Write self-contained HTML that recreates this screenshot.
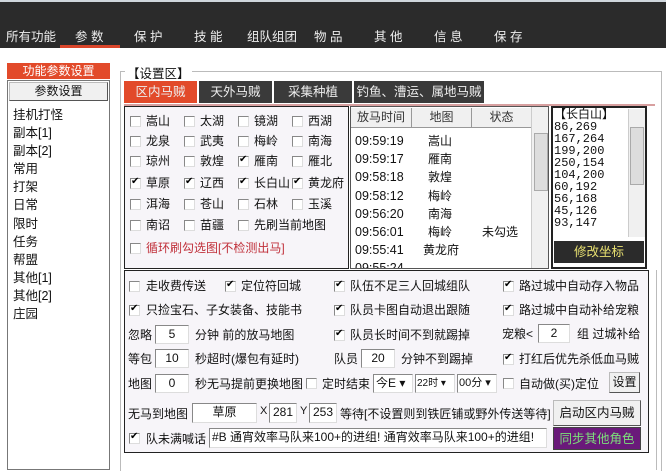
<!DOCTYPE html><html><head><meta charset="utf-8"><style>
body{margin:0;width:666px;height:470px;overflow:hidden;background:#fff;font-family:"Liberation Sans","Noto Sans CJK SC",sans-serif;font-size:12px;color:#111;position:relative}
.a{position:absolute;white-space:nowrap}
.top{left:0;top:0;width:666px;height:48px;background:#2b2b2b;border-top:2px solid #cfd6dc;box-sizing:border-box}
.m{color:#eee;top:26px;font-size:12.5px}
.cb{position:absolute;width:11px;height:11px;border:1px solid #888;border-right-color:#ddd;border-bottom-color:#ddd;background:#fff;box-sizing:border-box}
.cb.c::after{content:"✔";position:absolute;left:0;top:-3px;font-size:10px;color:#000}
.p{border:1px solid #222;background:#f7f5f9;box-sizing:border-box}
.in{position:absolute;background:#fff;border:1px solid #888;border-right-color:#ddd;border-bottom-color:#ddd;box-sizing:border-box;text-align:center;font-size:12px;line-height:17px;height:19px}
.btn{position:absolute;background:#f0f0f0;border:1px solid #bbb;border-right-color:#555;border-bottom-color:#555;box-sizing:border-box;text-align:center}
.tab{position:absolute;top:81px;height:22px;background:#3a3a3a;color:#eee;line-height:22px;text-align:center;font-size:12.5px}
.sb{position:absolute;background:#f0f0f0;border-left:1px solid #ccc}
.th{position:absolute;top:108px;height:20px;background:#f0f0f0;border-right:1px solid #999;border-bottom:1px solid #999;box-sizing:border-box;text-align:center;line-height:19px;color:#333}
</style></head><body>
<div class="a top"></div>
<div class="a m" style="left:6px">所有功能</div>
<div class="a m" style="left:75px">参 数</div>
<div class="a" style="left:60px;top:45px;width:60px;height:3px;background:#d9452a"></div>
<div class="a m" style="left:134px">保 护</div>
<div class="a m" style="left:194px">技 能</div>
<div class="a m" style="left:247px">组队组团</div>
<div class="a m" style="left:314px">物 品</div>
<div class="a m" style="left:374px">其 他</div>
<div class="a m" style="left:434px">信 息</div>
<div class="a m" style="left:494px">保 存</div>

<div class="a" style="left:7px;top:63px;width:103px;height:16px;background:#e24a2a;color:#fff;text-align:center;line-height:16px;font-size:12px">功能参数设置</div>
<div class="a" style="left:7px;top:80px;width:103px;height:390px;border:1px solid #777;box-sizing:border-box;background:#fff"></div>
<div class="btn" style="left:9px;top:82px;width:99px;height:19px;line-height:17px">参数设置</div>
<div class="a" style="left:13px;top:106px;line-height:18.1px;font-size:12.5px">挂机打怪<br>副本[1]<br>副本[2]<br>常用<br>打架<br>日常<br>限时<br>任务<br>帮盟<br>其他[1]<br>其他[2]<br>庄园</div>

<div class="a" style="left:120px;top:71px;width:540px;height:399px;border:1px solid #bbb;border-bottom:none"></div>
<div class="a" style="left:125px;top:63px;background:#fff;padding:0 2px;font-size:12.5px">【设置区】</div>
<div class="tab" style="left:124px;width:73px;background:#e24a2a">区内马贼</div>
<div class="tab" style="left:199px;width:73px">天外马贼</div>
<div class="tab" style="left:274px;width:78px">采集种植</div>
<div class="tab" style="left:354px;width:130px">钓鱼、漕运、属地马贼</div>

<div class="a p" style="left:124px;top:106px;width:225px;height:163px"></div>
<div class="a" style="left:124px;top:104px;width:531px;height:2px;background:#d8a0a0"></div>
<div class="cb" style="left:130px;top:116px"></div><div class="a" style="left:146px;top:112px">嵩山</div>
<div class="cb" style="left:184px;top:116px"></div><div class="a" style="left:200px;top:112px">太湖</div>
<div class="cb" style="left:238px;top:116px"></div><div class="a" style="left:254px;top:112px">镜湖</div>
<div class="cb" style="left:292px;top:116px"></div><div class="a" style="left:308px;top:112px">西湖</div>
<div class="cb" style="left:130px;top:136px"></div><div class="a" style="left:146px;top:132px">龙泉</div>
<div class="cb" style="left:184px;top:136px"></div><div class="a" style="left:200px;top:132px">武夷</div>
<div class="cb" style="left:238px;top:136px"></div><div class="a" style="left:254px;top:132px">梅岭</div>
<div class="cb" style="left:292px;top:136px"></div><div class="a" style="left:308px;top:132px">南海</div>
<div class="cb" style="left:130px;top:156px"></div><div class="a" style="left:146px;top:152px">琼州</div>
<div class="cb" style="left:184px;top:156px"></div><div class="a" style="left:200px;top:152px">敦煌</div>
<div class="cb c" style="left:238px;top:156px"></div><div class="a" style="left:254px;top:152px">雁南</div>
<div class="cb" style="left:292px;top:156px"></div><div class="a" style="left:308px;top:152px">雁北</div>
<div class="cb c" style="left:130px;top:178px"></div><div class="a" style="left:146px;top:174px">草原</div>
<div class="cb c" style="left:184px;top:178px"></div><div class="a" style="left:200px;top:174px">辽西</div>
<div class="cb c" style="left:238px;top:178px"></div><div class="a" style="left:254px;top:174px">长白山</div>
<div class="cb c" style="left:292px;top:178px"></div><div class="a" style="left:308px;top:174px">黄龙府</div>
<div class="cb" style="left:130px;top:199px"></div><div class="a" style="left:146px;top:195px">洱海</div>
<div class="cb" style="left:184px;top:199px"></div><div class="a" style="left:200px;top:195px">苍山</div>
<div class="cb" style="left:238px;top:199px"></div><div class="a" style="left:254px;top:195px">石林</div>
<div class="cb" style="left:292px;top:199px"></div><div class="a" style="left:308px;top:195px">玉溪</div>
<div class="cb" style="left:130px;top:220px"></div><div class="a" style="left:146px;top:216px">南诏</div>
<div class="cb" style="left:184px;top:220px"></div><div class="a" style="left:200px;top:216px">苗疆</div>
<div class="cb" style="left:238px;top:220px"></div><div class="a" style="left:254px;top:216px">先刷当前地图</div>
<div class="cb" style="left:130px;top:243px"></div><div class="a" style="left:146px;top:239px;color:#c0303a">循环刷勾选图[不检测出马]</div>

<div class="a" style="left:350px;top:106px;width:199px;height:163px;border:1px solid #555;background:#fff;box-sizing:border-box;overflow:hidden">
<div class="th" style="left:0;top:1px;width:61px">放马时间</div>
<div class="th" style="left:61px;top:1px;width:60px">地图</div>
<div class="th" style="left:121px;top:1px;width:60px">状态</div>
<div class="sb" style="left:180px;top:0;width:17px;height:161px"><div style="position:absolute;left:2px;top:26px;width:12px;height:56px;background:#ddd;border:1px solid #aaa"></div></div>
<div class="a" style="left:4px;top:25px;line-height:18.2px;font-size:12.5px">09:59:19<br>09:59:17<br>09:58:18<br>09:58:12<br>09:56:20<br>09:56:01<br>09:55:41<br>09:55:24</div>
<div class="a" style="left:77px;top:25px;line-height:18.2px">嵩山<br>雁南<br>敦煌<br>梅岭<br>南海<br>梅岭<br></div>
<div class="a" style="left:72px;top:134px">黄龙府</div>
<div class="a" style="left:131px;top:116px">未勾选</div>
</div>

<div class="a" style="left:551px;top:106px;width:96px;height:163px;border:2px solid #222;background:#fff;box-sizing:border-box"></div>
<div class="a" style="left:554px;top:109px;font-size:12px;line-height:12px;font-family:'Liberation Mono','Noto Sans CJK SC',monospace">【长白山】<br>86,269<br>167,264<br>199,200<br>250,154<br>104,200<br>60,192<br>56,168<br>45,126<br>93,147</div>
<div class="sb" style="left:628px;top:109px;width:16px;height:128px"><div style="position:absolute;left:1px;top:18px;width:12px;height:56px;background:#ddd;border:1px solid #aaa"></div></div>
<div class="a" style="left:554px;top:241px;width:90px;height:22px;background:#2b2b2b;color:#e8e070;text-align:center;line-height:22px;font-size:12.5px">修改坐标</div>

<div class="a p" style="left:124px;top:270px;width:525px;height:183px"></div>
<div class="a" style="left:656px;top:270px;width:1px;height:200px;background:#bbb"></div>
<div class="cb" style="left:129px;top:281px"></div><div class="a" style="left:146px;top:277px">走收费传送</div>
<div class="cb c" style="left:225px;top:281px"></div><div class="a" style="left:241px;top:277px">定位符回城</div>
<div class="cb c" style="left:334px;top:281px"></div><div class="a" style="left:350px;top:277px">队伍不足三人回城组队</div>
<div class="cb c" style="left:503px;top:281px"></div><div class="a" style="left:519px;top:277px">路过城中自动存入物品</div>
<div class="cb c" style="left:129px;top:305px"></div><div class="a" style="left:146px;top:301px">只捡宝石、子女装备、技能书</div>
<div class="cb c" style="left:334px;top:305px"></div><div class="a" style="left:350px;top:301px">队员卡图自动退出跟随</div>
<div class="cb c" style="left:503px;top:305px"></div><div class="a" style="left:519px;top:301px">路过城中自动补给宠粮</div>
<div class="a" style="left:128px;top:326px">忽略</div><div class="in" style="left:155px;top:325px;width:34px">5</div><div class="a" style="left:195px;top:326px">分钟 前的放马地图</div>
<div class="cb c" style="left:334px;top:330px"></div><div class="a" style="left:350px;top:326px">队员长时间不到就踢掉</div>
<div class="a" style="left:502px;top:325px">宠粮&lt;</div><div class="in" style="left:538px;top:324px;width:32px">2</div><div class="a" style="left:577px;top:325px">组 过城补给</div>
<div class="a" style="left:128px;top:350px">等包</div><div class="in" style="left:155px;top:349px;width:34px">10</div><div class="a" style="left:195px;top:350px">秒超时(爆包有延时)</div>
<div class="a" style="left:334px;top:350px">队员</div><div class="in" style="left:361px;top:349px;width:34px">20</div><div class="a" style="left:401px;top:350px">分钟不到踢掉</div>
<div class="cb c" style="left:503px;top:354px"></div><div class="a" style="left:519px;top:350px">打红后优先杀低血马贼</div>
<div class="a" style="left:128px;top:375px">地图</div><div class="in" style="left:155px;top:374px;width:34px">0</div><div class="a" style="left:195px;top:375px">秒无马提前更换地图</div>
<div class="cb" style="left:306px;top:378px"></div><div class="a" style="left:322px;top:375px">定时结束</div>
<div class="in" style="left:373px;top:374px;width:40px;text-align:left;padding-left:2px">今E ▾</div>
<div class="in" style="left:415px;top:374px;width:40px;text-align:left;padding-left:1px;font-size:10px">22时 ▾</div>
<div class="in" style="left:457px;top:374px;width:40px;text-align:left;padding-left:1px;font-size:11px">00分 ▾</div>
<div class="cb" style="left:503px;top:378px"></div><div class="a" style="left:519px;top:375px">自动做(买)定位</div>
<div class="btn" style="left:609px;top:372px;width:31px;height:21px;line-height:19px">设置</div>
<div class="a" style="left:128px;top:405px">无马到地图</div><div class="in" style="left:192px;top:403px;width:65px;height:20px">草原</div>
<div class="a" style="left:260px;top:405px;font-size:11px">X</div><div class="in" style="left:269px;top:403px;width:28px;height:20px">281</div>
<div class="a" style="left:300px;top:405px;font-size:11px">Y</div><div class="in" style="left:309px;top:403px;width:28px;height:20px">253</div>
<div class="a" style="left:340px;top:405px">等待[不设置则到铁匠铺或野外传送等待]</div>
<div class="btn" style="left:553px;top:400px;width:88px;height:26px;line-height:24px;font-size:12.5px">启动区内马贼</div>
<div class="cb c" style="left:129px;top:433px"></div><div class="a" style="left:146px;top:430px">队未满喊话</div>
<div class="in" style="left:209px;top:428px;width:338px;height:20px;text-align:left;padding-left:2px;font-size:12px">#B 通宵效率马队来100+的进组! 通宵效率马队来100+的进组!</div>
<div class="a" style="left:553px;top:427px;width:88px;height:23px;background:#6a1a7a;color:#7de07a;text-align:center;line-height:23px;border:1px solid #444;box-sizing:border-box;font-size:12.5px">同步其他角色</div>
</body></html>
